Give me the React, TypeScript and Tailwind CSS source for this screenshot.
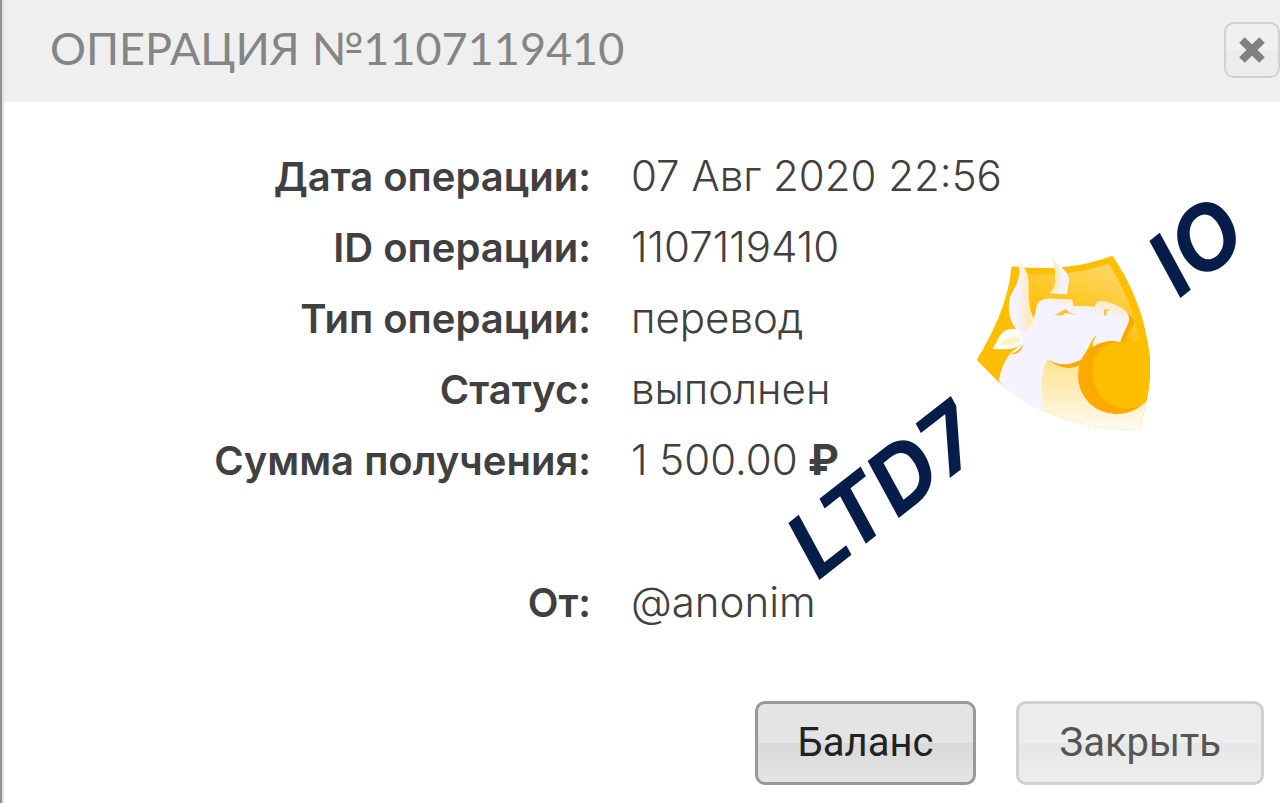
import React from 'react';
import clsx from 'clsx';

const rows = [
  { label: 'Дата операции:', value: '07 Авг 2020 22:56' },
  { label: 'ID операции:', value: '1107119410' },
  { label: 'Тип операции:', value: 'перевод' },
  { label: 'Статус:', value: 'выполнен' },
  { label: 'Сумма получения:', value: '1 500.00', currency: '₽' },
  { label: 'От:', value: '@anonim', separated: true },
];

function Watermark() {
  return (
    <svg
      viewBox="0 0 500 420"
      className="pointer-events-none absolute right-0 top-[78px] w-[500px] overflow-visible"
      aria-hidden="true"
    >
      <defs>
        <linearGradient id="panel" x1="0.4" y1="0.7" x2="0.7" y2="0">
          <stop offset="0.2" stopColor="#ffbf08" />
          <stop offset="1" stopColor="#ffd766" />
        </linearGradient>
        <linearGradient id="chest" x1="0" y1="0" x2="0" y2="1">
          <stop offset="0" stopColor="#ffe18c" />
          <stop offset="0.6" stopColor="#fff0c8" />
          <stop offset="1" stopColor="#fffdf8" />
        </linearGradient>
        <linearGradient id="horn" x1="0" y1="0" x2="1" y2="0">
          <stop offset="0.35" stopColor="#f4f3ff" />
          <stop offset="0.75" stopColor="#ffe9b0" />
          <stop offset="1" stopColor="#fffdf5" />
        </linearGradient>
        <linearGradient id="snout" x1="0.55" y1="0.55" x2="0.75" y2="0">
          <stop offset="0.3" stopColor="#f4f3ff" />
          <stop offset="1" stopColor="#ffe9b5" />
        </linearGradient>
        <clipPath id="shield">
          <path d="M155 79C260 90 360 84 457 47C522 140 561 250 570 360Q572 430 558 490L540 570C370 574 230 520 115 425L50 360C105 270 145 180 155 79Z" />
        </clipPath>
      </defs>

      <g
        fill="#071d49"
        className="font-['Inter',sans-serif] text-[88px] font-bold italic"
      >
        <text transform="translate(38 401) rotate(-38)">LTD7</text>
        <text transform="translate(399 119) rotate(-38)">IO</text>
      </g>

      <g transform="translate(180 60) scale(0.3333)">
        <g clipPath="url(#shield)">
          <path fill="#ffbf00" d="M40 40H580V580H40Z" />
          <path fill="url(#panel)" d="M198 102Q330 110 447 72Q515 180 536 290Q553 370 548 420H300V200H205Z" />
          <path fill="url(#chest)" d="M245 345H370L420 500L562 485V580H240Z" />
          <circle cx="470" cy="407" r="116" fill="#ffa800" />
          <path fill="#ffbf00" d="M398 390C398 340 430 308 478 307L500 300L575 300V470L557 488C520 511 470 510 440 485C410 462 398 430 398 390Z" />
          <path fill="#ffa800" d="M505 222L523 240C525 265 497 279 494 305L470 310Z" />
        </g>
        <path fill="#ffa800" d="M258 352Q320 385 388 350L362 374Q310 402 258 352Z" />
        <path
          fill="#f4f3ff"
          d="M165 266C190 267 225 255 229 200C235 180 255 174 280 176L336 179L340 198L405 200C407 181 425 181 440 186C470 194 508 210 507 238C503 262 489 274 481 306C450 298 420 306 399 321C396 309 403 300 409 286C390 300 388 326 370 347C345 377 300 382 262 357C240 400 243 460 250 516C200 494 152 462 117 423C121 391 134 363 150 341L183 312Z"
        />
        <path fill="url(#snout)" d="M270 177L336 179L340 198L405 200C407 181 425 181 440 186C470 194 508 210 507 238C503 262 489 274 481 306L450 300L440 240L345 225L270 210Z" />
        <path fill="url(#horn)" d="M174 62C206 85 207 120 206 153C207 205 215 230 231 251C219 259 207 252 202 270L172 269C151 250 143 215 148 180C155 145 189 130 174 62Z" />
        <path fill="#f4f3ff" d="M275 51C295 80 328 90 327 123C324 145 321 154 322 163L267 160C296 141 288 93 275 51Z" />
        <path fill="#ffecc0" d="M275 51L292 76C307 113 305 145 285 157L267 160C296 141 288 93 275 51Z" />
        <path fill="#fffdfa" d="M98 326C111 309 120 268 152 267C175 265 186 274 189 306C168 332 130 329 98 326Z" />
        <path fill="#fff0c8" d="M119 314C130 294 162 284 183 294C175 317 145 316 119 314Z" />
        <path fill="#ffb300" d="M150 343C172 334 181 328 188 313C187 336 170 343 150 343Z" />
        <path fill="#ffc22e" d="M283 224C300 220 305 210 318 208L330 219L356 226L316 219Q309 230 283 224Z" />
        <path fill="#ffc22e" d="M433 225C426 207 437 205 449 210L440 214L438 228Z" />
      </g>
    </svg>
  );
}

export default function App() {
  return (
    <div
      role="dialog"
      aria-labelledby="operation-title"
      className="flex min-h-screen flex-col border-l-2 border-l-[#8f9395] bg-[#e0e2e2] pl-0.5 font-['Inter',sans-serif] text-[#404040]"
    >
      <header className="flex items-start justify-between bg-[#efefef] pb-6 pl-[46px] pt-[22px]">
        <h1
          id="operation-title"
          className="font-['Lato','Open_Sans',sans-serif] text-[45px] leading-[52px] text-[#858585]"
        >
          ОПЕРАЦИЯ №1107119410
        </h1>
        <button
          type="button"
          aria-label="Закрыть окно"
          className="flex size-14 items-center justify-center rounded-[10px] border-2 border-[#d0d0d0] bg-linear-to-b from-[#f0f0f0] from-50% to-[#ececec] to-50%"
        >
          <svg
            viewBox="0 0 28 28"
            className="size-7"
            fill="none"
            stroke="#808080"
            strokeWidth="8"
            strokeLinejoin="round"
          >
            <path d="M4 4L24 24M24 4L4 24" />
          </svg>
        </button>
      </header>

      <main className="relative flex grow flex-col bg-white">
        <dl className="pt-[39px] leading-[70px]">
          {rows.map((row) => (
            <div
              key={row.label}
              className={clsx(
                'grid grid-cols-[46%_1fr] items-baseline gap-x-10',
                row.separated && 'mt-[71px]',
              )}
            >
              <dt className="text-right text-[40px] font-semibold">{row.label}</dt>
              <dd className="text-[42px] font-light">
                {row.value}
                {row.currency && <span className="font-bold"> {row.currency}</span>}
              </dd>
            </div>
          ))}
        </dl>

        <Watermark />

        <footer className="mt-auto flex justify-end gap-10 pb-[18px] pr-4 font-['Roboto',sans-serif] text-[40px] leading-[46px]">
          <button
            type="button"
            className="rounded-[10px] border-[3px] border-[#999] bg-linear-to-b from-[#e4e4e4] from-50% via-[#d9d9d9] via-50% to-[#e5e5e5] px-10 py-4 text-[#222]"
          >
            Баланс
          </button>
          <button
            type="button"
            className="rounded-[10px] border-[3px] border-[#d0d0d0] bg-linear-to-b from-[#ededed] from-50% via-[#e6e6e6] via-50% to-[#eee] px-10 py-4 text-[#555]"
          >
            Закрыть
          </button>
        </footer>
      </main>
    </div>
  );
}
